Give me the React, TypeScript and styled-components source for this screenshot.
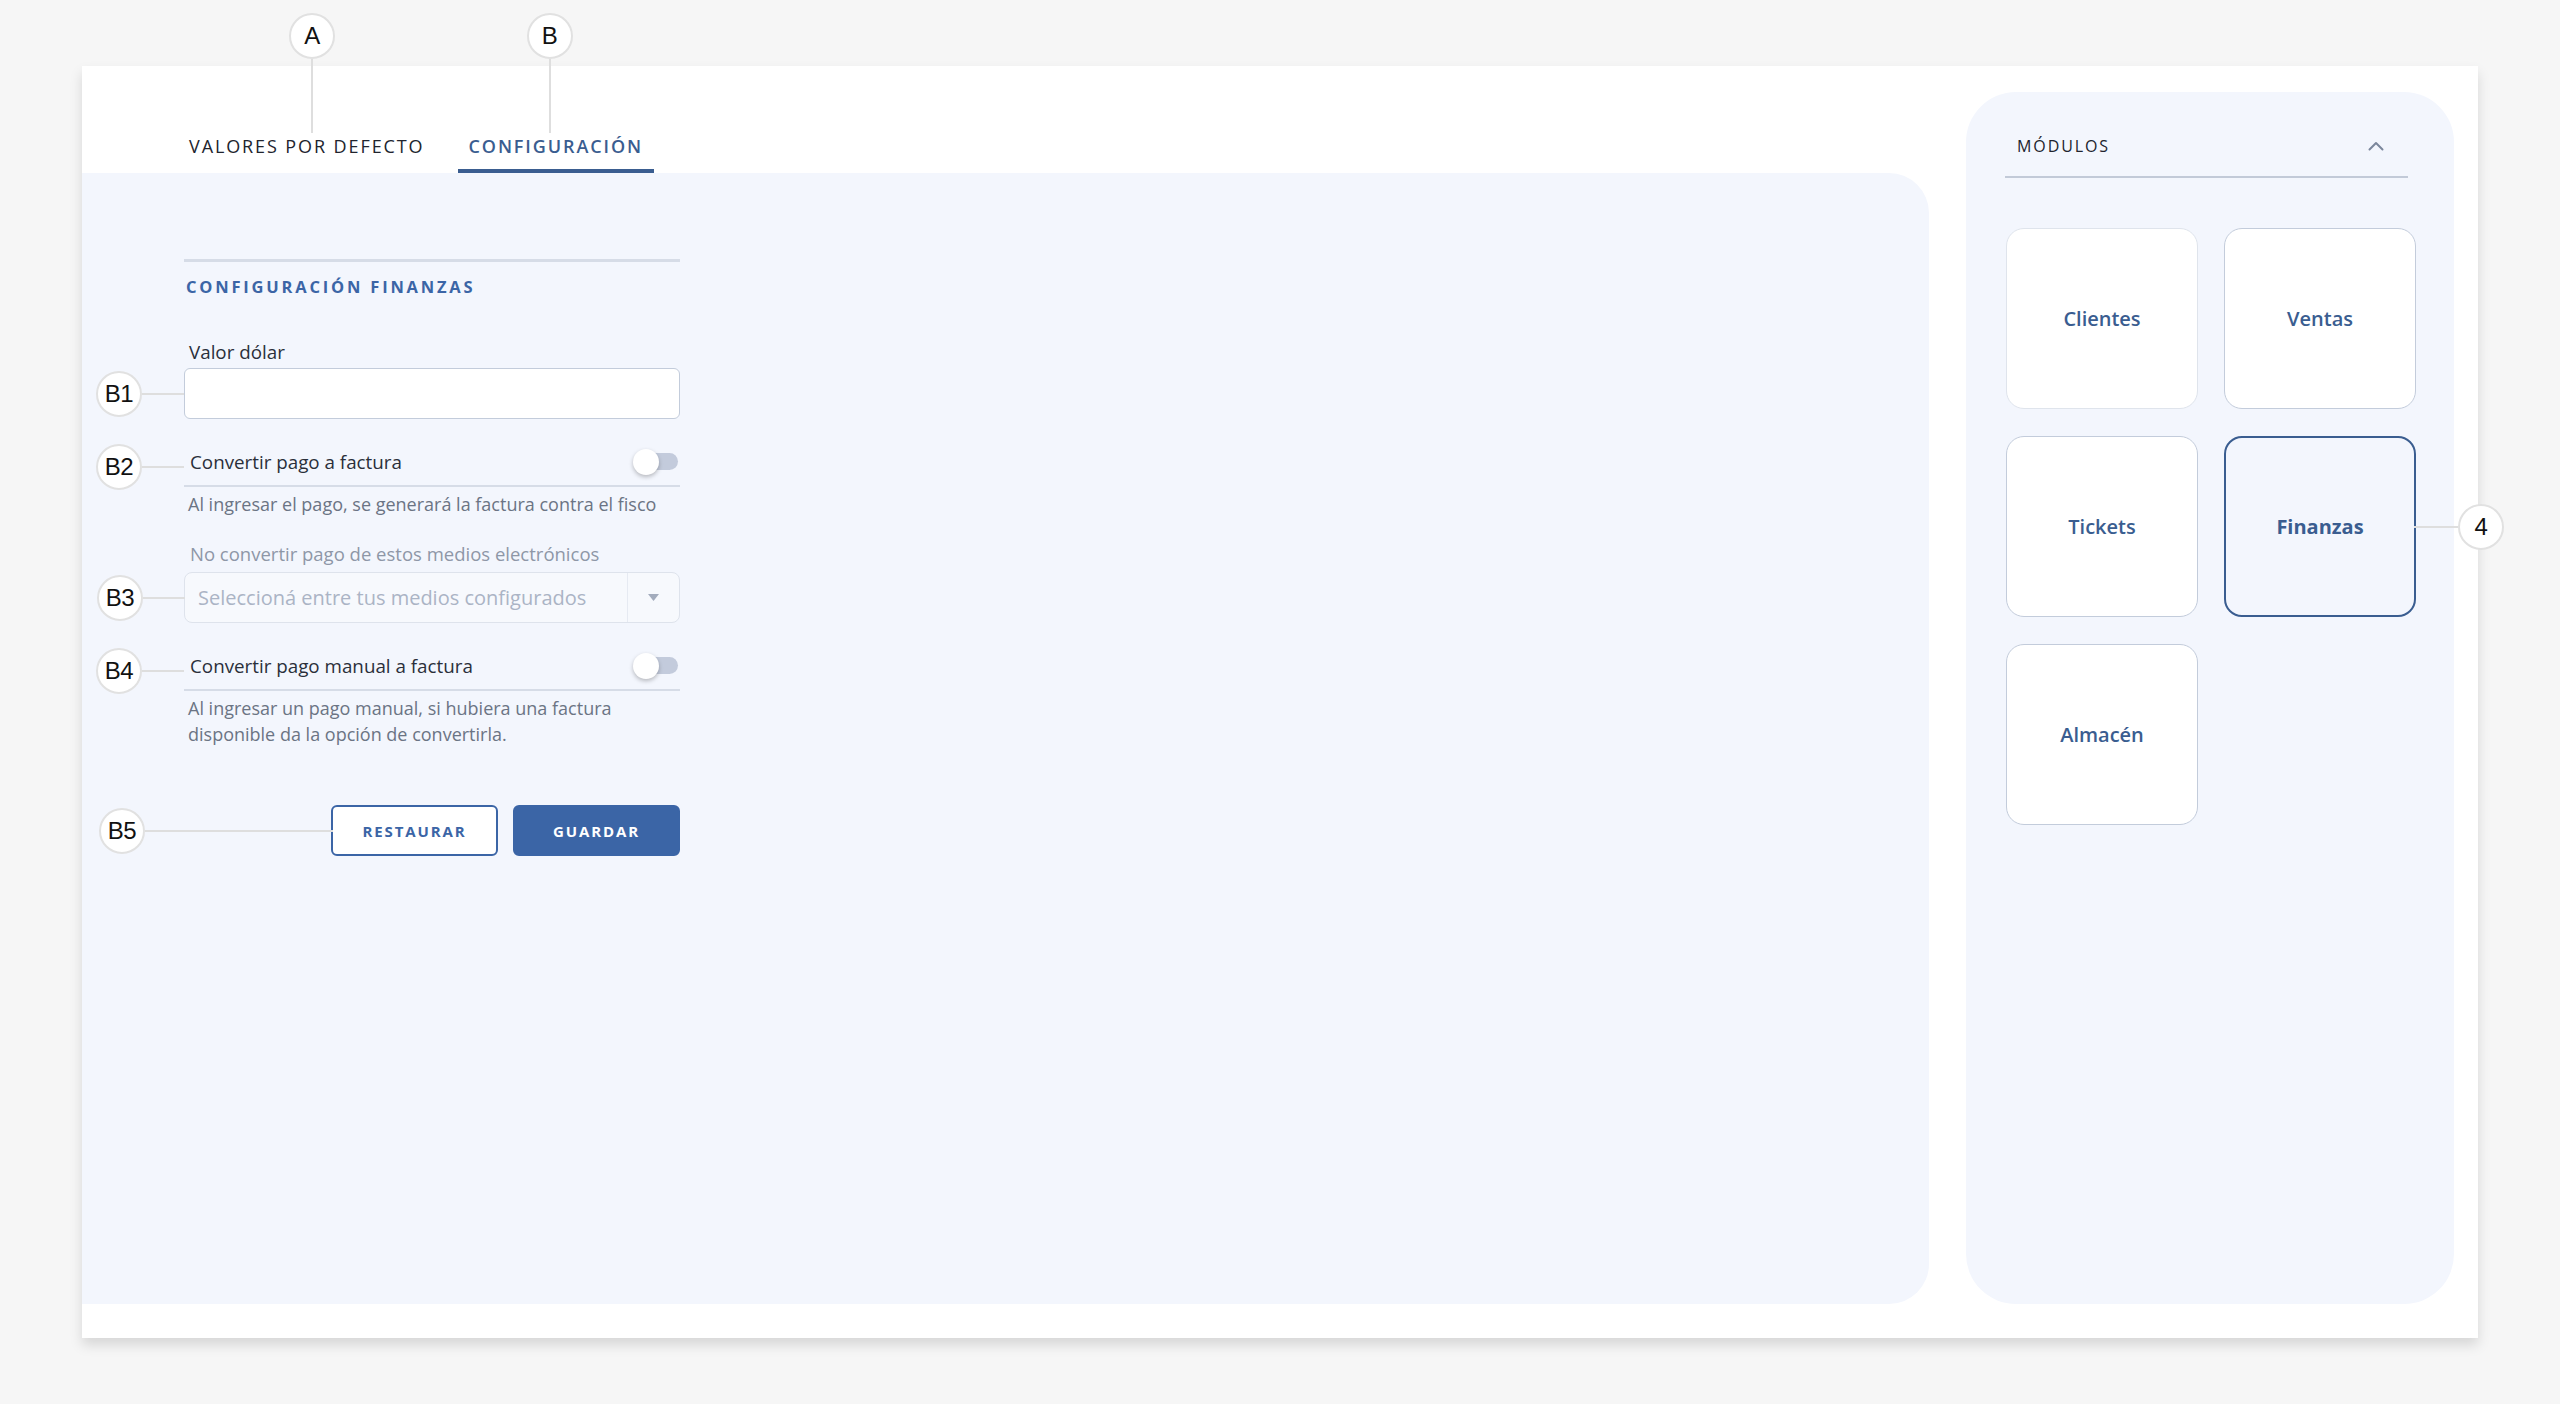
import React, { useState } from "react";
import styled, { createGlobalStyle } from "styled-components";

const colors = {
  page: "#f6f6f6",
  white: "#ffffff",
  panel: "#f3f6fd",
  primary: "#3b65a6",
  navy: "#3a5d90",
  ink: "#21242e",
  text: "#2a2f3a",
  muted: "#6b7484",
  faint: "#8e97a7",
  placeholder: "#abb4c5",
  line: "#d6dce7",
  border: "#c3ccdb",
  callout: "#dedede",
};

const GlobalStyle = createGlobalStyle`
  html, body {
    margin: 0;
    padding: 0;
    background: ${colors.page};
  }
  body {
    font-family: "Open Sans", "Noto Sans", sans-serif;
    color: ${colors.text};
  }
  * {
    box-sizing: border-box;
  }
`;

const Page = styled.div`
  min-height: 1404px;
  padding: 66px 82px 0;
`;

const Card = styled.div`
  display: flex;
  gap: 37px;
  height: 1272px;
  padding: 0 24px 34px 0;
  background: ${colors.white};
  box-shadow: 0 7px 12px rgba(0, 0, 0, 0.13);
`;

const MainColumn = styled.div`
  flex: 1;
  display: flex;
  flex-direction: column;
`;

const TabBar = styled.div`
  height: 107px;
  display: flex;
  align-items: flex-end;
  gap: 22px;
  padding-left: 96px;
`;

const Tab = styled.button<{ $active?: boolean }>`
  padding: 0 11px 10px;
  border: none;
  border-bottom: 4px solid ${(p) => (p.$active ? colors.navy : "transparent")};
  background: none;
  font-family: inherit;
  font-size: 18px;
  line-height: 26px;
  letter-spacing: 1.9px;
  font-weight: ${(p) => (p.$active ? 600 : 400)};
  color: ${(p) => (p.$active ? colors.navy : colors.ink)};
  cursor: pointer;
`;

const TabLabel = styled.span`
  position: relative;
  display: inline-block;
`;

const Panel = styled.div`
  flex: 1;
  background: ${colors.panel};
  border-radius: 0 40px 40px 0;
  padding: 86px 0 0 102px;
`;

const Form = styled.div`
  width: 496px;
  display: flex;
  flex-direction: column;
`;

const SectionTitle = styled.h3`
  margin: 0;
  padding: 13px 0 0 2px;
  border-top: 3px solid ${colors.line};
  font-size: 16.5px;
  line-height: 24px;
  font-weight: 700;
  letter-spacing: 2.8px;
  color: ${colors.primary};
`;

const FieldLabel = styled.label<{ $soft?: boolean }>`
  margin: ${(p) => (p.$soft ? "25px 0 6px 6px" : "41px 0 4px 5px")};
  font-size: ${(p) => (p.$soft ? "18.5px" : "18.8px")};
  line-height: 24px;
  font-weight: ${(p) => (p.$soft ? 400 : 500)};
  color: ${(p) => (p.$soft ? colors.faint : colors.text)};
`;

const FieldWrap = styled.div`
  position: relative;
`;

const TextInput = styled.input`
  width: 100%;
  height: 51px;
  padding: 0 14px;
  border: 1px solid ${colors.border};
  border-radius: 6px;
  background: ${colors.white};
  font-family: inherit;
  font-size: 18px;
  outline: none;
`;

const SelectBox = styled.div`
  position: relative;
  height: 51px;
  display: flex;
  align-items: center;
  border: 1px solid #dee3ec;
  border-radius: 8px;
  background: #f7f9fd;
`;

const Placeholder = styled.span`
  flex: 1;
  padding-left: 13px;
  font-size: 20px;
  color: ${colors.placeholder};
`;

const Caret = styled.span`
  width: 52px;
  height: 100%;
  display: flex;
  align-items: center;
  justify-content: center;
  border-left: 1px solid #e6eaf2;
`;

const ToggleRow = styled.div`
  position: relative;
  display: flex;
  align-items: center;
  justify-content: space-between;
  margin-top: 30px;
  padding: 0 2px 10px 6px;
  border-bottom: 2px solid ${colors.line};
`;

const ToggleText = styled.span`
  font-size: 18.8px;
  line-height: 26px;
  font-weight: 500;
  color: ${colors.text};
`;

const Switch = styled.button<{ $on: boolean }>`
  position: relative;
  width: 45px;
  height: 26px;
  padding: 0;
  border: none;
  background: none;
  cursor: pointer;

  &::before {
    content: "";
    position: absolute;
    left: 5px;
    right: 0;
    top: 4px;
    height: 17px;
    border-radius: 9px;
    background: ${(p) => (p.$on ? "#9fb4d8" : "#c3cbdc")};
  }

  &::after {
    content: "";
    position: absolute;
    top: 0;
    left: ${(p) => (p.$on ? "19px" : "0")};
    width: 26px;
    height: 26px;
    border-radius: 50%;
    background: ${(p) => (p.$on ? colors.primary : colors.white)};
    box-shadow: 0 2px 4px rgba(0, 0, 0, 0.25);
  }
`;

const HelpText = styled.p`
  margin: 4px 0 0 4px;
  font-size: 18px;
  line-height: 26px;
  color: ${colors.muted};
`;

const Actions = styled.div`
  display: flex;
  justify-content: flex-end;
  gap: 15px;
  margin-top: 58px;
`;

const Button = styled.button<{ $variant: "outline" | "solid" }>`
  position: relative;
  width: 167px;
  height: 51px;
  border-radius: 6px;
  border: 2px solid ${colors.primary};
  background: ${(p) => (p.$variant === "solid" ? colors.primary : colors.white)};
  color: ${(p) => (p.$variant === "solid" ? colors.white : colors.primary)};
  font-family: inherit;
  font-size: 15px;
  font-weight: 700;
  letter-spacing: 1.9px;
  cursor: pointer;
`;

const SidePanel = styled.aside`
  width: 488px;
  margin-top: 26px;
  padding: 42px 38px 0 39px;
  background: ${colors.panel};
  border-radius: 50px;
`;

const PanelHeader = styled.div`
  display: flex;
  align-items: center;
  justify-content: space-between;
  margin-right: 8px;
  padding: 0 24px 18px 12px;
  border-bottom: 2px solid #c2cad8;
`;

const PanelTitle = styled.span`
  font-size: 16px;
  line-height: 24px;
  font-weight: 500;
  letter-spacing: 1.9px;
  color: ${colors.ink};
`;

const ModuleGrid = styled.div`
  display: grid;
  grid-template-columns: 192px 192px;
  grid-auto-rows: 181px;
  column-gap: 26px;
  row-gap: 27px;
  margin: 50px 0 0 1px;
`;

const ModuleCard = styled.button<{ $active?: boolean; $soft?: boolean }>`
  position: relative;
  display: flex;
  align-items: center;
  justify-content: center;
  border-radius: 18px;
  border: ${(p) =>
    p.$active ? `2.5px solid ${colors.navy}` : `1px solid ${p.$soft ? "#dfe4ec" : colors.border}`};
  background: ${(p) => (p.$active ? colors.panel : colors.white)};
  font-family: inherit;
  font-size: 20px;
  font-weight: ${(p) => (p.$active ? 700 : 600)};
  color: ${colors.navy};
  cursor: pointer;
`;

/* numbered callouts with a leader line */
const Bubble = styled.span`
  flex: none;
  width: 46px;
  height: 46px;
  border-radius: 50%;
  border: 2px solid #e1e1e1;
  background: ${colors.white};
  display: flex;
  align-items: center;
  justify-content: center;
  font-family: "Liberation Sans", Arial, sans-serif;
  font-size: 24px;
  color: #111;
  letter-spacing: -0.5px;
  font-weight: 400;
`;

const Leader = styled.span<{ $len: number; $vertical?: boolean }>`
  flex: none;
  background: ${colors.callout};
  width: ${(p) => (p.$vertical ? "2px" : `${p.$len}px`)};
  height: ${(p) => (p.$vertical ? `${p.$len}px` : "2px")};
`;

const LeftCallout = styled.span`
  position: absolute;
  right: 100%;
  top: 50%;
  transform: translateY(-50%);
  display: flex;
  align-items: center;
`;

const RightCallout = styled.span`
  position: absolute;
  left: 100%;
  top: 50%;
  transform: translateY(-50%);
  display: flex;
  align-items: center;
`;

const TopCallout = styled.span<{ $x: number }>`
  position: absolute;
  bottom: 100%;
  left: ${(p) => p.$x}px;
  transform: translateX(-50%);
  display: flex;
  flex-direction: column;
  align-items: center;
`;

const ChevronUp = () => (
  <svg width="16" height="10" viewBox="0 0 16 10" fill="none">
    <polyline points="1.5,8.5 8,2 14.5,8.5" stroke="#7b879c" strokeWidth="2" strokeLinecap="round" strokeLinejoin="round" />
  </svg>
);

const CaretDown = () => (
  <svg width="11" height="7" viewBox="0 0 11 7">
    <polygon points="0,0 11,0 5.5,7" fill="#a3acbd" />
  </svg>
);

const modules = [
  { id: "clientes", name: "Clientes", soft: true },
  { id: "ventas", name: "Ventas" },
  { id: "tickets", name: "Tickets" },
  { id: "finanzas", name: "Finanzas" },
  { id: "almacen", name: "Almacén" },
];

const App = () => {
  const [tab, setTab] = useState("config");
  const [autoInvoice, setAutoInvoice] = useState(false);
  const [manualInvoice, setManualInvoice] = useState(false);
  const [dollar, setDollar] = useState("");
  const [selected, setSelected] = useState("finanzas");

  return (
    <>
      <GlobalStyle />
      <Page>
        <Card>
          <MainColumn>
            <TabBar>
              <Tab $active={tab === "defaults"} onClick={() => setTab("defaults")}>
                <TabLabel>
                  VALORES POR DEFECTO
                  <TopCallout $x={123}>
                    <Bubble>A</Bubble>
                    <Leader $len={74} $vertical />
                  </TopCallout>
                </TabLabel>
              </Tab>
              <Tab $active={tab === "config"} onClick={() => setTab("config")}>
                <TabLabel>
                  CONFIGURACIÓN
                  <TopCallout $x={81}>
                    <Bubble>B</Bubble>
                    <Leader $len={74} $vertical />
                  </TopCallout>
                </TabLabel>
              </Tab>
            </TabBar>

            <Panel>
              <Form>
                <SectionTitle>CONFIGURACIÓN FINANZAS</SectionTitle>

                <FieldLabel>Valor dólar</FieldLabel>
                <FieldWrap>
                  <TextInput value={dollar} onChange={(e) => setDollar(e.target.value)} />
                  <LeftCallout>
                    <Bubble>B1</Bubble>
                    <Leader $len={42} />
                  </LeftCallout>
                </FieldWrap>

                <ToggleRow>
                  <ToggleText>Convertir pago a factura</ToggleText>
                  <Switch $on={autoInvoice} onClick={() => setAutoInvoice(!autoInvoice)} />
                  <LeftCallout>
                    <Bubble>B2</Bubble>
                    <Leader $len={42} />
                  </LeftCallout>
                </ToggleRow>
                <HelpText>Al ingresar el pago, se generará la factura contra el fisco</HelpText>

                <FieldLabel $soft>No convertir pago de estos medios electrónicos</FieldLabel>
                <SelectBox>
                  <Placeholder>Seleccioná entre tus medios configurados</Placeholder>
                  <Caret>
                    <CaretDown />
                  </Caret>
                  <LeftCallout>
                    <Bubble>B3</Bubble>
                    <Leader $len={42} />
                  </LeftCallout>
                </SelectBox>

                <ToggleRow>
                  <ToggleText>Convertir pago manual a factura</ToggleText>
                  <Switch $on={manualInvoice} onClick={() => setManualInvoice(!manualInvoice)} />
                  <LeftCallout>
                    <Bubble>B4</Bubble>
                    <Leader $len={42} />
                  </LeftCallout>
                </ToggleRow>
                <HelpText>
                  Al ingresar un pago manual, si hubiera una factura
                  <br />
                  disponible da la opción de convertirla.
                </HelpText>

                <Actions>
                  <Button $variant="outline">
                    RESTAURAR
                    <LeftCallout>
                      <Bubble>B5</Bubble>
                      <Leader $len={188} />
                    </LeftCallout>
                  </Button>
                  <Button $variant="solid">GUARDAR</Button>
                </Actions>
              </Form>
            </Panel>
          </MainColumn>

          <SidePanel>
            <PanelHeader>
              <PanelTitle>MÓDULOS</PanelTitle>
              <ChevronUp />
            </PanelHeader>
            <ModuleGrid>
              {modules.map((m) => (
                <ModuleCard
                  key={m.id}
                  $active={selected === m.id}
                  $soft={m.soft}
                  onClick={() => setSelected(m.id)}
                >
                  {m.name}
                  {m.id === "finanzas" && (
                    <RightCallout>
                      <Leader $len={44} />
                      <Bubble>4</Bubble>
                    </RightCallout>
                  )}
                </ModuleCard>
              ))}
            </ModuleGrid>
          </SidePanel>
        </Card>
      </Page>
    </>
  );
};

export default App;
